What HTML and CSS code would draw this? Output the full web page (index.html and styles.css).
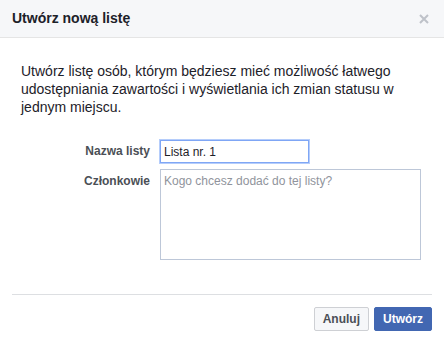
FILE: index.html
```html
<!DOCTYPE html>
<html lang="pl">
<head>
  <meta charset="UTF-8" />
  <title>Utwórz nową listę</title>
  <link rel="stylesheet" href="styles.css">
</head>
<body>
  <div class="dialog">
    <div class="dialog-header">
      <h2 class="dialog-title">Utwórz nową listę</h2>
      <a class="close-btn" href="#" title="Zamknij">
        <svg width="10" height="10" viewBox="0 0 10 10">
          <path d="M1 1 L9 9 M9 1 L1 9" stroke="#bec2c9" stroke-width="2" />
        </svg>
      </a>
    </div>

    <p class="intro">Utwórz listę osób, którym będziesz mieć możliwość łatwego udostępniania zawartości i wyświetlania ich zmian statusu w jednym miejscu.</p>

    <div class="form">
      <label class="form-label" for="listName">Nazwa listy</label>
      <input class="text-input" id="listName" type="text" value="Lista nr. 1">

      <label class="form-label members-label" for="members">Członkowie</label>
      <textarea class="members-input" id="members" placeholder="Kogo chcesz dodać do tej listy?"></textarea>
    </div>

    <div class="dialog-footer">
      <button class="btn">Anuluj</button>
      <button class="btn btn-primary">Utwórz</button>
    </div>
  </div>
</body>
</html>
```

FILE: styles.css
```css
* {
  margin: 0;
  padding: 0;
  box-sizing: border-box;
}

body {
  background: #fff;
  font-family: "Liberation Sans", Arial, Helvetica, sans-serif;
  color: #1d2129;
}

.dialog {
  width: 444px;
  height: 343px;
  background: #fff;
}

/* Header */
.dialog-header {
  height: 38px;
  background: #f6f7f9;
  border-bottom: 1px solid #e5e5e5;
  padding: 0 15px 0 12px;
  display: flex;
  align-items: center;
  justify-content: space-between;
}

.dialog-title {
  font-size: 14px;
  font-weight: bold;
  line-height: 19px;
  color: #1d2129;
}

.close-btn {
  display: flex;
  width: 10px;
  height: 10px;
}

/* Body */
.intro {
  margin: 24px 21px 0;
  font-size: 14px;
  line-height: 18px;
}

.form {
  display: grid;
  grid-template-columns: 138px 261px;
  column-gap: 10px;
  row-gap: 6px;
  margin: 24px 0 0 12px;
}

.form-label {
  font-size: 12px;
  font-weight: bold;
  color: #4b4f56;
  text-align: right;
  line-height: 23px;
}

.members-label {
  padding-top: 1px;
}

.text-input {
  width: 149px;
  height: 23px;
  border: 1px solid #7fa6f5;
  box-shadow: 0 0 0 1px #b5cdfb;
  padding: 0 3px;
  font: 12px "Liberation Sans", Arial, sans-serif;
  color: #1d2129;
  outline: none;
}

.members-input {
  width: 261px;
  height: 91px;
  border: 1px solid #bdc7d8;
  padding: 3px 3px;
  font: 12px/16px "Liberation Sans", Arial, sans-serif;
  color: #1d2129;
  resize: none;
  outline: none;
}

.members-input::placeholder {
  color: #90949c;
}

/* Footer */
.dialog-footer {
  margin: 34px 12px 0;
  border-top: 1px solid #dddfe2;
  padding: 12px 0;
  display: flex;
  justify-content: flex-end;
  gap: 5px;
}

.btn {
  height: 24px;
  padding: 0 8px;
  border: 1px solid #ced0d4;
  border-radius: 2px;
  background: #f6f7f9;
  color: #4b4f56;
  font: bold 12px "Liberation Sans", Arial, sans-serif;
  line-height: 22px;
}

.btn-primary {
  background: #4267b2;
  border-color: #4267b2;
  color: #fff;
}
```
